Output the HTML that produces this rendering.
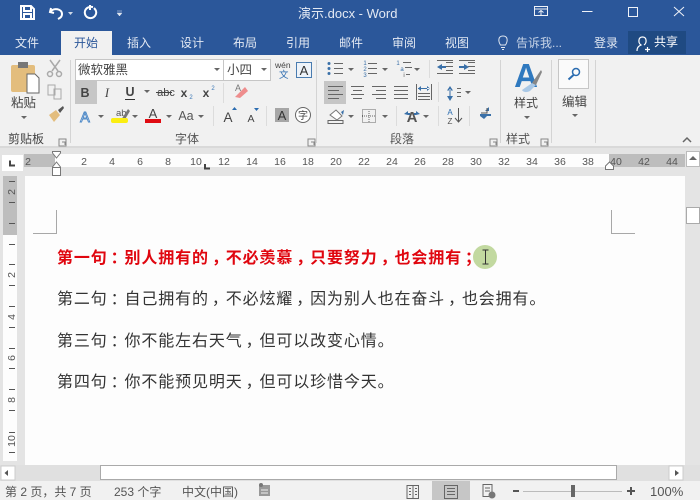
<!DOCTYPE html>
<html><head><meta charset="utf-8">
<style>
html,body{margin:0;padding:0;background:#f1f1f1;width:700px;height:500px;overflow:hidden}
svg{position:absolute;left:0;top:0;display:block}
text{font-family:"Liberation Sans","Noto Sans CJK SC",sans-serif}
.w{fill:#e3e9f3;font-size:12px}
.g{fill:#444;font-size:12px}
.r{fill:#555;font-size:10.5px;text-anchor:middle}
.line{position:absolute;left:57px;font:16px/20px "Liberation Sans","Noto Sans CJK SC",sans-serif;letter-spacing:.87px;color:#333;white-space:nowrap}
.line b{color:#e0060f;font-weight:700}
.line i{font-style:normal;position:relative;left:3px}
.line i.p{left:0}
</style></head><body>
<svg width="700" height="500" viewBox="0 0 700 500">
<defs>
<path id="dn" d="M-3 0H3L0 3Z" fill="#666"/>
<path id="lc" d="M0 0H7V7H0Z M3 3H6V6" fill="none" stroke="#888" stroke-width="1"/>
</defs>
<!-- title + tabs -->
<rect width="700" height="55" fill="#2b579a"/>
<rect x="61" y="31" width="51" height="24" fill="#f1f1f1"/>
<rect x="628" y="31" width="58" height="23" fill="#1f4a82"/>
<text x="298" y="18" fill="#e3e9f3" font-size="13">演示.docx - Word</text>
<!-- QAT -->
<g fill="none" stroke="#fff" stroke-width="2">
<path d="M21 6H31L34 9V19H21Z"/><path d="M24 7V11H31V7M24 19V14H31V19"/>
<path d="M51 8L50 12L54 13M50 12C54 7 62 9 62 14C62 17 60 18 58 19" stroke-width="2"/>
<path d="M93 7C87 6 84 10 85 14C86 19 94 20 96 14C97 11 95 9 94 8M90 5V10" stroke-width="2"/>
</g>
<path d="M68 12H73L70.500 15Z" fill="#cfd9e8"/>
<path d="M117 11H122M117 13H122L119.500 16Z" fill="#dfe6f0" stroke="#dfe6f0" stroke-width=".5"/>
<!-- window controls -->
<g fill="none" stroke="#f0f3f8" stroke-width="1">
<path d="M534.500 6.500H547.500V15.500H534.500ZM534.500 9H547.500M541 15V10.500M538.500 12.500L541 10.500L543.500 12.500"/>
<path d="M582 11.500H592.500"/>
<rect x="628.500" y="7.500" width="9" height="9"/>
<path d="M674 7L684 16M684 7L674 16"/>
</g>
<!-- tabs -->
<text class="w" x="15" y="47">文件</text>
<text x="74" y="47" font-size="12" fill="#2b579a">开始</text>
<text class="w" x="127" y="47">插入</text>
<text class="w" x="180" y="47">设计</text>
<text class="w" x="233" y="47">布局</text>
<text class="w" x="286" y="47">引用</text>
<text class="w" x="339" y="47">邮件</text>
<text class="w" x="392" y="47">审阅</text>
<text class="w" x="445" y="47">视图</text>
<path d="M500.500 45C498 41 498 36 503 36C508 36 508 41 505.500 45ZM501 47.500H505M502 49.500H504" fill="none" stroke="#dfe6f0"/>
<text x="516" y="47" font-size="12" fill="#c6d3e6">告诉我...</text>
<text class="w" x="594" y="47">登录</text>
<path d="M637 51C637 47 639 46 641 45C638 43 638 37 642.500 37C647 37 647 43 644 45M645 49.500H650M647.500 47V52" fill="none" stroke="#fff" stroke-width="1.200"/>
<text x="654" y="46" font-size="12" fill="#fff">共享</text>

<!-- ribbon -->
<rect y="55" width="700" height="91" fill="#f1f1f1"/>
<rect y="146" width="700" height="2" fill="#d9d9d9"/>
<g stroke="#d4d4d4"><path d="M70.500 60V143M316.500 60V143M500.500 60V143M551.500 60V143M595.500 60V143"/></g>
<g stroke="#dcdcdc"><path d="M223.500 83V103M213.500 106V126M266.500 106V126M429.500 60V78M438.500 82V102M396.500 106V126M438.500 106V126M469.500 106V126"/></g>
<!-- clipboard -->
<rect x="11" y="65" width="24" height="27" rx="2" fill="#e3bd7d"/>
<rect x="18" y="62" width="10" height="6" fill="#777"/>
<path d="M27 74H35L39 78V93H27Z" fill="#fff" stroke="#666"/>
<text class="g" x="11" y="107" style="font-size:12.500px">粘贴</text>
<use href="#dn" x="24" y="116"/>
<!-- cut, copy, brush -->
<g fill="none" stroke="#a9a9a9" stroke-width="1.500">
<path d="M50 60L58 71M60 60L52 71"/><circle cx="50" cy="74" r="2.500"/><circle cx="59" cy="74" r="2.500"/>
<path d="M48 85H55V95H48ZM54 89H61V99H54Z" stroke-width="1"/>
</g>
<path d="M49 115L56 110L60 115L54 122Z" fill="#e3bd7d"/><path d="M58 110L63 106L64 108L60 113Z" fill="#555"/>
<text class="g" x="8" y="143">剪贴板</text>
<use href="#lc" x="59" y="139"/>
<!-- font boxes -->
<rect x="75.500" y="59.500" width="148" height="21" fill="#fff" stroke="#c6c6c6"/>
<rect x="223.500" y="59.500" width="47" height="21" fill="#fff" stroke="#c6c6c6"/>
<text x="78" y="74" font-size="12.500" fill="#444">微软雅黑</text>
<use href="#dn" x="217" y="68"/>
<text x="227" y="74" font-size="12.500" fill="#444">小四</text>
<use href="#dn" x="264" y="68"/>
<text x="275" y="68" font-size="8.500" fill="#444">wén</text>
<text x="279" y="78" font-size="9.500" fill="#2d6cb0">文</text>
<rect x="296.500" y="62.500" width="15" height="15" fill="#eef3f9" stroke="#4a7cb0"/>
<text x="304" y="75" font-size="13" fill="#333" text-anchor="middle">A</text>
<!-- row 2 -->
<rect x="75" y="81" width="22" height="23" fill="#c6c6c6"/>
<text x="85" y="97" font-size="12.500" font-weight="700" fill="#444" text-anchor="middle">B</text>
<text x="107" y="97" font-size="12.500" font-style="italic" fill="#444" text-anchor="middle" style="font-family:'Liberation Serif',serif">I</text>
<text x="130" y="96" font-size="12.500" font-weight="700" fill="#444" text-anchor="middle">U</text>
<path d="M125 99.500H135" stroke="#333"/>
<use href="#dn" x="147" y="90"/>
<text x="166" y="96" font-size="11" fill="#444" text-anchor="middle">abc</text>
<path d="M156 92.500H172" stroke="#444"/>
<text x="184" y="97" font-size="12" font-weight="700" fill="#444" text-anchor="middle">x</text>
<text x="191" y="99" font-size="6" fill="#3a76b5" text-anchor="middle">2</text>
<text x="206" y="97" font-size="12" font-weight="700" fill="#444" text-anchor="middle">x</text>
<text x="213" y="90" font-size="6" fill="#3a76b5" text-anchor="middle">2</text>
<path d="M235 97L245 87L248 91L240 98Z" fill="#ee8d8d"/>
<text x="235" y="91" font-size="9" fill="#777">A</text>
<!-- row 3 -->
<text x="85" y="122" font-size="14.500" fill="#e9f1fa" stroke="#4a86c5" stroke-width=".9" text-anchor="middle">A</text>
<use href="#dn" x="101" y="115"/>
<text x="116" y="116" font-size="9.500" fill="#555">ab</text>
<path d="M121 120L128 109L130 111L124 121Z" fill="#777"/>
<rect x="111" y="118" width="17" height="5" rx="2" fill="#fbee11"/>
<use href="#dn" x="135" y="115"/>
<text x="153" y="118" font-size="13" fill="#444" text-anchor="middle">A</text>
<rect x="145" y="119" width="16" height="4" fill="#e00b12"/>
<use href="#dn" x="169" y="115"/>
<text x="186" y="120" font-size="12.500" fill="#555" text-anchor="middle">Aa</text>
<use href="#dn" x="201" y="115"/>
<text x="228" y="122" font-size="13.500" fill="#444" text-anchor="middle">A</text>
<path d="M232 110H237L234.500 107Z" fill="#2b6cb0"/>
<text x="251" y="122" font-size="10.500" fill="#444" text-anchor="middle">A</text>
<path d="M254 108H259L256.500 111Z" fill="#2b6cb0"/>
<rect x="275" y="108" width="14" height="14" fill="#a6a6a6"/>
<text x="282" y="120" font-size="13" fill="#333" text-anchor="middle">A</text>
<circle cx="303" cy="115" r="7.500" fill="#fff" stroke="#666"/>
<text x="303" y="119" font-size="10" fill="#444" text-anchor="middle">字</text>
<text class="g" x="175" y="143" style="fill:#555">字体</text>
<use href="#lc" x="308" y="139"/>
<!-- paragraph -->
<g fill="none" stroke="#666" stroke-width="1">
<path d="M334 63.500H343M334 68.500H343M334 73.500H343"/>
<path d="M368 63.500H377M368 68.500H377M368 73.500H377"/>
<path d="M403 62.500H411M405 67.500H412M406 74.500H410"/>
<path d="M446 62.500H453M446 66.500H453M446 70.500H453M437 73.500H453M437 60.500H453" />
<path d="M468 62.500H475M468 66.500H475M468 70.500H475M459 73.500H475M459 60.500H475"/>
<path d="M328 86.500H343M328 90.500H339M328 94.500H343M328 98.500H339"/>
<path d="M351 86.500H364M353 90.500H362M351 94.500H364M353 98.500H362"/>
<path d="M372 86.500H386M376 90.500H386M372 94.500H386M376 98.500H386"/>
<path d="M394 86.500H408M394 90.500H408M394 94.500H408M394 98.500H408"/>
<path d="M416.500 84V100M431.500 84V100M418 96.500H430M418 99.500H430M418 93.500H430"/>
<path d="M457 88.500H461M457 92.500H461M457 96.500H461"/>
<rect x="362.500" y="109.500" width="13" height="13" stroke-dasharray="1 1"/>
<path d="M362 116H376M369 109V123" stroke-dasharray="1 1"/>
<path d="M328 120.500H343V123.500H328Z"/>
</g>
<g fill="#3a70a8">
<circle cx="329" cy="63.500" r="1.500"/><circle cx="329" cy="68.500" r="1.500"/><circle cx="329" cy="73.500" r="1.500"/>
<path d="M437 67L442 64V70ZM441 66H446V68H441ZM459 66H464V68H459ZM469 67L464 64V70Z"/>
<path d="M418 88H430V89H418ZM418 88.500L421 86V91ZM430 88.500L427 86V91Z"/>
<path d="M447 90.500H453L450 86ZM447 96H453L450 101ZM449.500 89H450.500V97H449.500Z"/>
<path d="M480 114H491V116H480ZM485 111L489 107V111ZM484 119L480 116H487Z"/>
</g>
<text x="365" y="65" font-size="6" fill="#3a70a8" text-anchor="middle">1</text>
<text x="365" y="71" font-size="6" fill="#3a70a8" text-anchor="middle">2</text>
<text x="365" y="77" font-size="6" fill="#3a70a8" text-anchor="middle">3</text>
<text x="398" y="65" font-size="6" fill="#3a70a8" text-anchor="middle">1</text>
<text x="402" y="71" font-size="6" fill="#3a70a8" text-anchor="middle">a</text>
<text x="404" y="77" font-size="6" fill="#555" text-anchor="middle">i</text>
<use href="#dn" x="351" y="68"/><use href="#dn" x="385" y="68"/><use href="#dn" x="417" y="68"/>
<rect x="324" y="81" width="22" height="23" fill="#c6c6c6"/>
<path d="M328 86.500H343M328 90.500H339M328 94.500H343M328 98.500H339" stroke="#666" fill="none"/>
<use href="#dn" x="468" y="91"/>
<path d="M330 115L336 110L342 116L337 120Z" fill="#fff" stroke="#777"/>
<path d="M341 112L344 110L343 115Z" fill="#3a70a8"/>
<use href="#dn" x="351" y="115"/><use href="#dn" x="385" y="115"/><use href="#dn" x="426" y="115"/>
<text x="412" y="122" font-size="15" font-weight="700" fill="#555" text-anchor="middle">A</text>
<path d="M404 114L408 111V113H410V115H408ZM420 114L416 111V113H414V115H416Z" fill="#3a70a8"/>
<text x="450" y="115" font-size="8" fill="#2b6cb0" text-anchor="middle">A</text>
<text x="450" y="124" font-size="8" fill="#555" text-anchor="middle">Z</text>
<path d="M458.500 108V122M455 118L458.500 122L462 118" fill="none" stroke="#555"/>
<path d="M487 108V113H481" fill="none" stroke="#555"/>
<text class="g" x="390" y="143" style="fill:#555">段落</text>
<use href="#lc" x="490" y="139"/>
<!-- styles -->
<text x="526" y="87" font-size="33" font-weight="700" fill="#2f79bf" text-anchor="middle">A</text>
<path d="M522 90L532 83L536 85L530 91C526 93 523 92 522 90Z" fill="#a9c8e6"/>
<path d="M532 83L541 70L542 72L536 85Z" fill="#888"/>
<text class="g" x="514" y="107">样式</text>
<use href="#dn" x="527" y="116"/>
<text class="g" x="506" y="143" style="fill:#555">样式</text>
<use href="#lc" x="541" y="139"/>
<!-- edit -->
<rect x="558.500" y="59.500" width="30" height="29" fill="#fafafa" stroke="#c6c6c6"/>
<circle cx="576" cy="72" r="3.500" fill="none" stroke="#2b6cb0" stroke-width="1.500"/>
<path d="M573.500 75L568.500 79.500" stroke="#2b6cb0" stroke-width="2"/>
<text class="g" x="562" y="106" style="font-size:12.500px">编辑</text>
<use href="#dn" x="575" y="114"/>
<path d="M683 142L687 138L691 142" fill="none" stroke="#666" stroke-width="1.500"/>

<!-- ruler band -->
<rect y="148" width="700" height="29" fill="#e4e4e4"/>
<rect x="24" y="154" width="661" height="13" fill="#fdfdfd"/>
<rect x="24" y="154" width="31" height="13" fill="#bdbdbd"/>
<rect x="609" y="154" width="76" height="13" fill="#bdbdbd"/>
<rect x="2" y="155" width="21" height="16" fill="#fff"/>
<path d="M10 160.500V165.500H15" fill="none" stroke="#444" stroke-width="2"/>
<text class="r" x="28" y="165">2</text>
<g class="rr">
<text class="r" x="84" y="165">2</text><text class="r" x="112" y="165">4</text><text class="r" x="140" y="165">6</text><text class="r" x="168" y="165">8</text><text class="r" x="196" y="165">10</text><text class="r" x="224" y="165">12</text><text class="r" x="252" y="165">14</text><text class="r" x="280" y="165">16</text><text class="r" x="308" y="165">18</text><text class="r" x="336" y="165">20</text><text class="r" x="364" y="165">22</text><text class="r" x="392" y="165">24</text><text class="r" x="420" y="165">26</text><text class="r" x="448" y="165">28</text><text class="r" x="476" y="165">30</text><text class="r" x="504" y="165">32</text><text class="r" x="532" y="165">34</text><text class="r" x="560" y="165">36</text><text class="r" x="588" y="165">38</text><text class="r" x="616" y="165">40</text><text class="r" x="644" y="165">42</text><text class="r" x="672" y="165">44</text>
</g>
<path d="M52.500 151.500H60.500V153L56.500 158L52.500 153Z" fill="#fff" stroke="#777"/>
<path d="M56.500 162L60.500 167V175.500H52.500V167Z" fill="#fff" stroke="#777"/>
<path d="M52.500 167.500H60.500" stroke="#777"/>
<path d="M605.500 169.500V166L609.500 162L613.500 166V169.500Z" fill="#fff" stroke="#777"/>
<path d="M205 164V168.500H210" fill="none" stroke="#444" stroke-width="2"/>
<!-- side ruler -->
<rect y="177" width="25" height="288" fill="#e4e4e4"/>
<rect x="3" y="176" width="14" height="59" fill="#bdbdbd"/>
<rect x="3" y="235" width="14" height="226" fill="#fdfdfd"/>
<g stroke="#555"><path d="M9 181.500H15M9 202.500H15M9 223.500H15M9 244.500H15M9 264.500H15M9 285.500H15M9 306.500H15M9 327.500H15M9 348.500H15M9 368.500H15M9 389.500H15M9 410.500H15M9 432.500H15M9 452.500H15"/></g>
<g font-size="10.500" fill="#555" text-anchor="middle">
<text transform="translate(15,192) rotate(-90)">2</text>
<text transform="translate(15,275) rotate(-90)">2</text>
<text transform="translate(15,317) rotate(-90)">4</text>
<text transform="translate(15,358) rotate(-90)">6</text>
<text transform="translate(15,400) rotate(-90)">8</text>
<text transform="translate(15,441) rotate(-90)">10</text>
</g>
<!-- document -->
<rect x="25" y="176" width="660" height="289" fill="#fdfdfd"/>
<path d="M56.500 210V233.500H33M611.500 210V233.500H635" fill="none" stroke="#a8a8a8"/>
<circle cx="485" cy="257" r="12" fill="#c2d9a0"/>
<path d="M482.500 250H488.500M485.500 250V264M482.500 264H488.500" fill="none" stroke="#333" stroke-width="1"/>
<!-- v scrollbar -->
<rect x="685" y="148" width="15" height="333" fill="#e4e4e4"/>
<rect x="686.500" y="151.500" width="13" height="15" fill="#fff" stroke="#bbb"/>
<path d="M689 160H697L693 156Z" fill="#666"/>
<rect x="686.500" y="207.500" width="13" height="16" fill="#fff" stroke="#aaa"/>
<rect x="686.500" y="466" width="13" height="9" fill="#fff" stroke="#bbb"/>
<!-- h scrollbar -->
<rect y="465" width="700" height="16" fill="#e0e0e0"/>
<rect x="1" y="466" width="14" height="14" fill="#fff" stroke="#ccc"/>
<path d="M8 470V476L4.500 473Z" fill="#555"/>
<rect x="100.500" y="465.500" width="516" height="14" fill="#fff" stroke="#aaa"/>
<rect x="669" y="466" width="14" height="14" fill="#fff" stroke="#ccc"/>
<path d="M675 470V476L679 473Z" fill="#555"/>
<!-- status -->
<rect y="481" width="700" height="19" fill="#f1f1f1"/>
<rect x="432" y="481" width="38" height="19" fill="#c6c6c6"/>
<g font-size="12" fill="#555">
<text x="5" y="496">第 2 页，共 7 页</text>
<text x="114" y="496">253 个字</text>
<text x="182" y="496">中文(中国)</text>
<text x="650" y="496" font-size="13">100%</text>
</g>
<rect x="259" y="485" width="11" height="11" fill="#999"/>
<path d="M261 490H268M261 493H268" stroke="#eee"/>
<circle cx="261" cy="485" r="2" fill="#777"/>
<g fill="none" stroke="#666">
<path d="M407 485.500H418.500V498.500H407ZM418.500 485.500H419M419 485.500H419M413 485.500V498.500M409 488.500H411M409 491.500H411M409 494.500H411M415 488.500H417M415 491.500H417M415 494.500H417"/>
<path d="M444.500 485.500H457.500V498.500H444.500ZM447 488.500H455M447 491.500H455M447 494.500H455"/>
<path d="M483 484.500H492V496.500H483ZM485 488H490M485 491H490"/>
</g>
<circle cx="492" cy="495" r="3.500" fill="#777"/>
<path d="M513 491H519" stroke="#555" stroke-width="2"/>
<path d="M523 491.500H622" stroke="#bbb"/>
<rect x="571" y="485" width="4" height="12" fill="#666"/>
<path d="M627 491H635M631 487V495" stroke="#555" stroke-width="2"/>
</svg>
<div class="line" style="top:249px"><b>第一句<i>：</i>别人拥有的<i>，</i>不必羡慕<i>，</i>只要努力<i>，</i>也会拥有<i>；</i></b></div>
<div class="line" style="top:290px">第二句<i>：</i>自己拥有的<i>，</i>不必炫耀<i>，</i>因为别人也在奋斗<i>，</i>也会拥有<i class="p">。</i></div>
<div class="line" style="top:332px">第三句<i>：</i>你不能左右天气<i>，</i>但可以改变心情<i class="p">。</i></div>
<div class="line" style="top:373px">第四句<i>：</i>你不能预见明天<i>，</i>但可以珍惜今天<i class="p">。</i></div>
</body></html>
